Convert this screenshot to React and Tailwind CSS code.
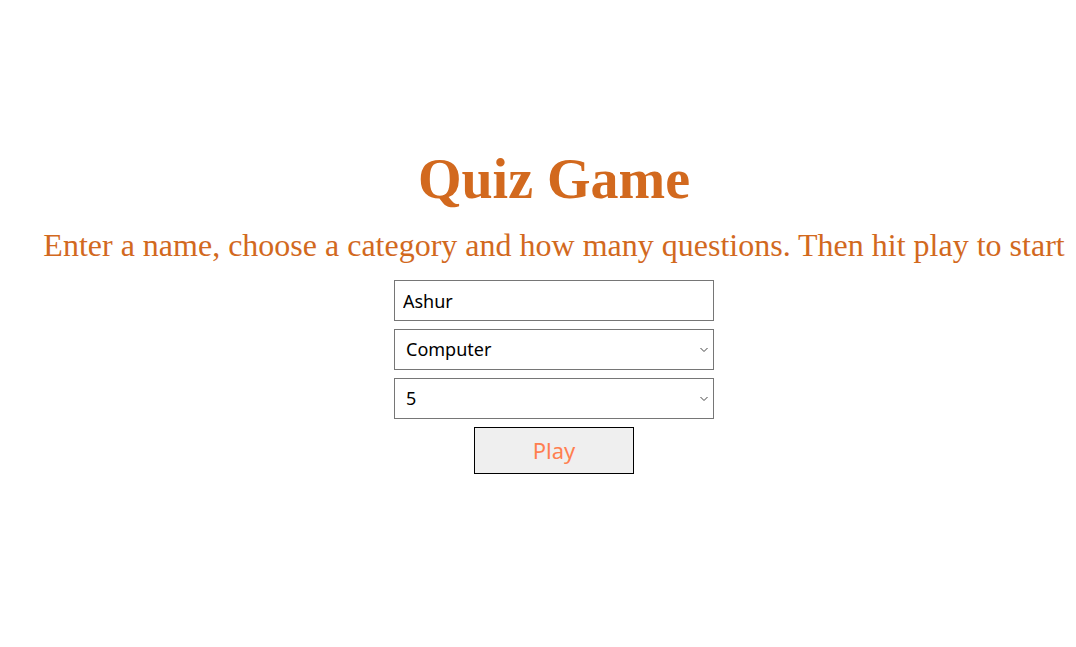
import React, { useState } from 'react';

const Chevron = () => (
  <svg className="pointer-events-none absolute right-[6px] top-1/2 -translate-y-1/2" width="8" height="5" viewBox="0 0 8 5" fill="none">
    <path d="M0.5 0.5 L4 4 L7.5 0.5" stroke="#444" strokeWidth="1" />
  </svg>
);

export default function App() {
  const [name, setName] = useState('Ashur');
  const [category, setCategory] = useState('Computer');
  const [amount, setAmount] = useState('5');

  return (
    <div className="min-h-[647px] w-full bg-white pl-[32px] pt-[146px]">
      <div className="flex flex-col items-center">
        <h1 className="text-[56px] font-bold leading-[66px] text-[#d2691e]" style={{ fontFamily: '"Liberation Serif", serif' }}>
          Quiz Game
        </h1>
        <p className="mt-[13px] whitespace-nowrap text-[32px] leading-[40px] text-[#d2691e]" style={{ fontFamily: '"Liberation Serif", serif' }}>
          Enter a name, choose a category and how many questions. Then hit play to start
        </p>
        <div className="mt-[15px] flex flex-col items-center gap-[8px]" style={{ fontFamily: '"Noto Sans", sans-serif' }}>
          <input
            value={name}
            onChange={(e) => setName(e.target.value)}
            className="h-[41px] w-[320px] border border-[#767676] px-[8px] text-[18px] text-black outline-none"
          />
          <div className="relative">
            <select
              value={category}
              onChange={(e) => setCategory(e.target.value)}
              className="h-[41px] w-[320px] appearance-none border border-[#767676] bg-white pl-[11px] text-[18px] text-black outline-none"
            >
              <option>Computer</option>
              <option>General Knowledge</option>
              <option>History</option>
            </select>
            <Chevron />
          </div>
          <div className="relative">
            <select
              value={amount}
              onChange={(e) => setAmount(e.target.value)}
              className="h-[41px] w-[320px] appearance-none border border-[#767676] bg-white pl-[11px] text-[18px] text-black outline-none"
            >
              <option>5</option>
              <option>10</option>
              <option>15</option>
            </select>
            <Chevron />
          </div>
          <button className="h-[47px] w-[160px] border border-black bg-[#efefef] text-[22px] text-[#ff7f50]">
            Play
          </button>
        </div>
      </div>
    </div>
  );
}
